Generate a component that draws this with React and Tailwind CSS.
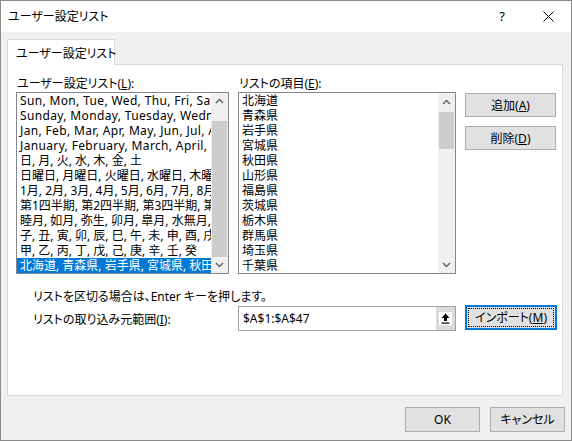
const leftRows = [
  'Sun, Mon, Tue, Wed, Thu, Fri, Sat',
  'Sunday, Monday, Tuesday, Wednesday, Thursday, Friday, Saturday',
  'Jan, Feb, Mar, Apr, May, Jun, Jul, Aug, Sep, Oct, Nov, Dec',
  'January, February, March, April, May, June, July',
  '日, 月, 火, 水, 木, 金, 土',
  '日曜日, 月曜日, 火曜日, 水曜日, 木曜日, 金曜日, 土曜日',
  '1月, 2月, 3月, 4月, 5月, 6月, 7月, 8月, 9月',
  '第1四半期, 第2四半期, 第3四半期, 第4四半期',
  '睦月, 如月, 弥生, 卯月, 皐月, 水無月, 文月',
  '子, 丑, 寅, 卯, 辰, 巳, 午, 未, 申, 酉, 戌, 亥',
  '甲, 乙, 丙, 丁, 戊, 己, 庚, 辛, 壬, 癸',
  '北海道, 青森県, 岩手県, 宮城県, 秋田県, 山形県',
];

const items = ['北海道', '青森県', '岩手県', '宮城県', '秋田県', '山形県', '福島県', '茨城県', '栃木県', '群馬県', '埼玉県', '千葉県'];

function Chevron({ down }) {
  return (
    <svg width="9" height="6" viewBox="0 0 9 6" className={down ? 'rotate-180' : ''}>
      <polyline points="1,5 4.5,1.5 8,5" fill="none" stroke="#606060" strokeWidth="1.4" />
    </svg>
  );
}

function Scrollbar({ thumbTop, thumbHeight }) {
  return (
    <div className="w-[17px] h-full bg-[#f0f0f0] flex flex-col shrink-0">
      <div className="h-[17px] flex items-center justify-center"><Chevron /></div>
      <div className="flex-1 flex flex-col">
        <div style={{ height: thumbTop }} />
        <div className="bg-[#cdcdcd] mx-px" style={{ height: thumbHeight }} />
      </div>
      <div className="h-[17px] flex items-center justify-center"><Chevron down /></div>
    </div>
  );
}

function Button({ children, className = '' }) {
  return (
    <div className={`bg-[#e1e1e1] border border-[#adadad] flex items-center justify-center whitespace-nowrap ${className}`}>
      {children}
    </div>
  );
}

export default function App() {
  return (
    <div className="w-[572px] h-[441px] border border-[#8a8a8a] bg-[#f0f0f0] flex flex-col text-[12px] text-black font-['Noto_Sans','Noto_Sans_CJK_JP',sans-serif] [font-feature-settings:'palt'] leading-[15px]">
      {/* title bar */}
      <div className="h-[31px] bg-white flex items-center pl-[7px] shrink-0">
        <span>ユーザー設定リスト</span>
        <div className="ml-auto flex h-full">
          <div className="w-[46px] flex items-center justify-center text-[13px]">?</div>
          <div className="w-[46px] flex items-center justify-center">
            <svg width="11" height="11" viewBox="0 0 11 11">
              <path d="M0.5 0.5 L10.5 10.5 M10.5 0.5 L0.5 10.5" stroke="#000" strokeWidth="1" />
            </svg>
          </div>
        </div>
      </div>

      <div className="flex-1 flex flex-col pl-[6px] pt-[7px]">
        <div className="w-[108px] h-[26px] -mb-px relative z-10 bg-white border border-b-0 border-[#d9d9d9] pl-[8px] pt-[6px] whitespace-nowrap">
          ユーザー設定リスト
        </div>

        <div className="w-[556px] h-[332px] bg-white border border-[#d9d9d9] pt-[11px] pl-[8px] flex flex-col">
          <div className="flex">
            <div className="w-[213px] flex flex-col">
              <div className="h-[16px] pl-px">ユーザー設定リスト(<span className="underline">L</span>):</div>
              <div className="h-[182px] border border-[#828790] flex">
                <div className="flex-1 min-w-0 overflow-hidden">
                  {leftRows.map((r, i) => (
                    <div key={i} className={`h-[15px] pl-[3px] whitespace-nowrap ${i < 4 ? 'tracking-[0.35px]' : ''} ${i === leftRows.length - 1 ? 'bg-[#0078d7] text-white' : ''}`}>{r}</div>
                  ))}
                </div>
                <Scrollbar thumbTop={11} thumbHeight={136} />
              </div>
            </div>

            <div className="w-[218px] ml-[9px] flex flex-col">
              <div className="h-[16px] pl-px">リストの項目(<span className="underline">E</span>):</div>
              <div className="h-[182px] border border-[#828790] flex">
                <div className="flex-1 min-w-0 overflow-hidden">
                  {items.map((r, i) => (
                    <div key={i} className="h-[15px] pl-[3px] whitespace-nowrap">{r}</div>
                  ))}
                </div>
                <Scrollbar thumbTop={2} thumbHeight={37} />
              </div>
            </div>

            <div className="ml-[9px] pt-[17px] flex flex-col gap-[9px]">
              <Button className="w-[91px] h-[24px]">追加(<span className="underline">A</span>)</Button>
              <Button className="w-[91px] h-[24px]">削除(<span className="underline">D</span>)</Button>
            </div>
          </div>

          <div className="ml-[17px] mt-[15px]">リストを区切る場合は、Enter キーを押します。</div>

          <div className="flex items-center mt-[2px]">
            <div className="w-[222px] pl-[17px] pt-[1px] whitespace-nowrap">リストの取り込み元範囲(<span className="underline">I</span>):</div>
            <div className="w-[218px] h-[25px] border border-[#a0a0a0] flex items-center">
              <div className="flex-1 pl-[4px]">$A$1:$A$47</div>
              <div className="w-[19px] h-full bg-[#dadada] flex items-center justify-center">
                <div className="w-[13px] h-[13px] bg-white flex items-center justify-center">
                  <svg width="9" height="11" viewBox="0 0 9 11">
                    <path d="M4.5 0.5 L8.5 5 L6 5 L6 8 L3 8 L3 5 L0.5 5 Z" fill="#000" />
                    <rect x="0.5" y="9.5" width="8" height="1.2" fill="#000" />
                  </svg>
                </div>
              </div>
            </div>
            <div className="ml-[9px] w-[92px] h-[25px] -mt-[2px] bg-[#e1e1e1] border-2 border-[#0078d7] p-px">
              <div className="w-full h-full border border-dotted border-black flex items-center justify-center whitespace-nowrap">
                インポート(<span className="underline">M</span>)
              </div>
            </div>
          </div>
        </div>

        <div className="flex justify-end pr-[6px] mt-[11px] gap-[10px]">
          <Button className="w-[75px] h-[25px]">OK</Button>
          <Button className="w-[75px] h-[25px]">キャンセル</Button>
        </div>
      </div>
    </div>
  );
}
